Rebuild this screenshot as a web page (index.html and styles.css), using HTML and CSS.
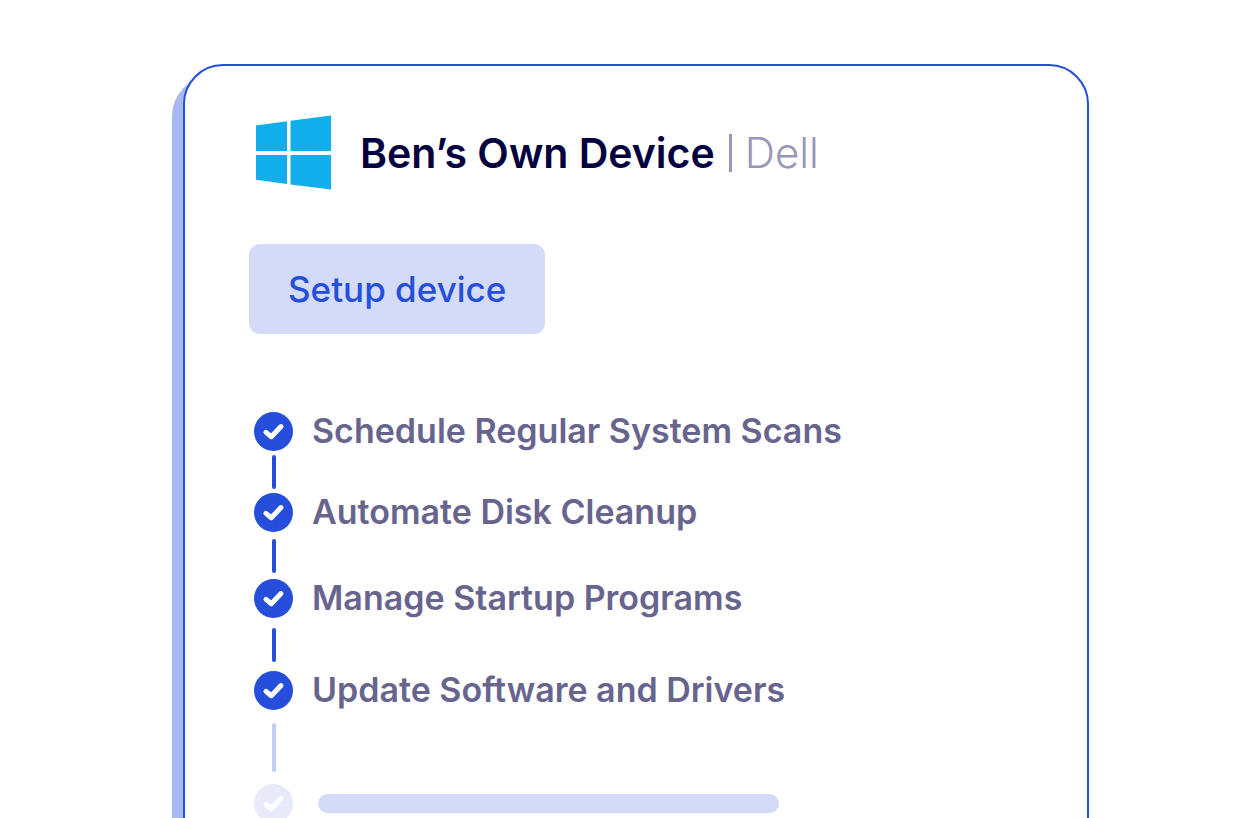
FILE: index.html
```html
<!DOCTYPE html>
<html lang="en">
<head>
  <meta charset="UTF-8">
  <meta name="viewport" content="width=device-width, initial-scale=1.0">
  <title>Ben’s Own Device</title>
  <link rel="stylesheet" href="styles.css">
</head>
<body>
  <svg class="symbols" aria-hidden="true">
    <symbol id="check" viewBox="0 0 39 39">
      <circle cx="19.5" cy="19.5" r="19.5" fill="currentColor"/>
      <path d="M12 20.4 L17.3 24.7 L27 14.6" fill="none" stroke="#fff" stroke-width="5" stroke-linecap="round" stroke-linejoin="round"/>
    </symbol>
  </svg>

  <main class="stage">
    <section class="card">
      <header class="device">
        <svg class="logo" viewBox="0 0 75 75" role="img" aria-label="Windows">
          <g fill="#10aeeb">
            <path d="M0 10.4 L31 6.2 V36 H0 Z"/>
            <path d="M34.5 5.8 L75 0.5 V36 H34.5 Z"/>
            <path d="M0 40 H31 V69 L0 64.7 Z"/>
            <path d="M34.5 40 H75 V74.5 L34.5 69.4 Z"/>
          </g>
        </svg>
        <h1 class="title">Ben’s Own Device</h1>
        <span class="divider"></span>
        <span class="brand">Dell</span>
      </header>

      <button class="setup-button" type="button">Setup device</button>

      <ol class="steps">
        <li class="step">
          <div class="marker">
            <svg class="check"><use href="#check"/></svg>
            <span class="line"></span>
          </div>
          <span class="label">Schedule Regular System Scans</span>
        </li>
        <li class="step medium">
          <div class="marker">
            <svg class="check"><use href="#check"/></svg>
            <span class="line"></span>
          </div>
          <span class="label">Automate Disk Cleanup</span>
        </li>
        <li class="step large">
          <div class="marker">
            <svg class="check"><use href="#check"/></svg>
            <span class="line"></span>
          </div>
          <span class="label">Manage Startup Programs</span>
        </li>
        <li class="step last-done">
          <div class="marker">
            <svg class="check"><use href="#check"/></svg>
            <span class="line"></span>
          </div>
          <span class="label">Update Software and Drivers</span>
        </li>
        <li class="step pending">
          <div class="marker">
            <svg class="check"><use href="#check"/></svg>
          </div>
          <span class="placeholder"></span>
        </li>
      </ol>
    </section>
  </main>
</body>
</html>
```

FILE: styles.css
```css
* {
  box-sizing: border-box;
}
body {
  margin: 0;
  font-family: Inter, "Liberation Sans", sans-serif;
  background-color: #fff;
}
.symbols {
  display: none;
}
.stage {
  height: 100vh;
  padding: 64px 171px 0 183px;
  overflow: hidden;
}
.card {
  min-height: 100vh;
  padding: 49px 64px;
  border: 2px solid #254edb;
  border-radius: 40px;
  background-color: #fff;
  box-shadow: -11px 12px 0 #a8b8f1;
}
.device {
  display: flex;
  align-items: center;
  padding-left: 7px;
}
.logo {
  width: 75px;
  height: 75px;
  margin-right: 29px;
}
.title {
  margin: 0;
  font-size: 41px;
  font-weight: 600;
  line-height: 52px;
  color: #02003f;
  white-space: nowrap;
}
.divider {
  width: 3px;
  height: 38px;
  margin: 0 13px 0 14px;
  background-color: #9996b8;
}
.brand {
  font-size: 42px;
  font-weight: 300;
  line-height: 52px;
  color: #9996b8;
}
.setup-button {
  display: block;
  height: 90px;
  margin-top: 54px;
  padding: 0 39px;
  border: none;
  border-radius: 11px;
  background-color: #d4dbf8;
  color: #254edb;
  font-family: inherit;
  font-size: 35px;
  font-weight: 500;
  white-space: nowrap;
  cursor: pointer;
}
.steps {
  margin: 78px 0 0;
  padding: 0 0 0 5px;
  list-style: none;
}
.step {
  display: flex;
  gap: 19px;
  min-height: 81px;
  color: #254edb;
}
.step.medium {
  min-height: 86px;
}
.step.large {
  min-height: 92px;
}
.step.last-done {
  min-height: 113px;
}
.marker {
  display: flex;
  flex-direction: column;
  align-items: center;
  width: 39px;
}
.check {
  flex: none;
  width: 39px;
  height: 39px;
}
.line {
  width: 4px;
  height: 34px;
  margin: auto;
  border-radius: 2px;
  background-color: #254edb;
}
.last-done .line {
  height: 49px;
  background-color: #c3cef6;
}
.label {
  font-size: 34px;
  font-weight: 600;
  line-height: 37px;
  color: #67658d;
}
.pending {
  gap: 25px;
  color: #e7eaf8;
}
.placeholder {
  width: 461px;
  height: 19px;
  margin-top: 10px;
  border-radius: 10px;
  background-color: #d4dbf8;
}
```
